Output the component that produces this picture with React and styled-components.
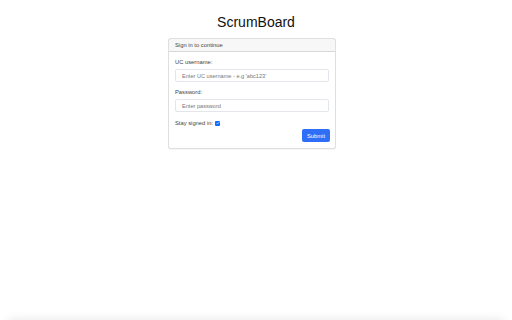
import styled, { createGlobalStyle } from 'styled-components';

const GlobalStyle = createGlobalStyle`
	html, body {
		margin: 0;
		padding: 0;
		background: #fff;
		font-family: 'Liberation Sans', Arial, sans-serif;
		color: #212529;
	}
`;

const Page = styled.div`
	width: 512px;
	height: 320px;
	display: flex;
	flex-direction: column;
	align-items: center;
	overflow: hidden;
	position: relative;
`;

const Title = styled.h1`
	margin: 15px 0 0;
	height: 23px;
	font-size: 14px;
	line-height: 14px;
	font-weight: 400;
	color: #111;
`;

const Card = styled.div`
	width: 168px;
	margin-right: 8px;
	box-sizing: border-box;
	border: 1px solid rgba(0, 0, 0, 0.125);
	border-radius: 3px;
	background: #fff;
	box-shadow: 0 1px 1px rgba(0, 0, 0, 0.04);
`;

const CardHeader = styled.div`
	height: 12px;
	padding: 0 6px;
	display: flex;
	align-items: center;
	font-size: 5.8px;
	color: #444;
	background: rgba(0, 0, 0, 0.03);
	border-bottom: 1px solid rgba(0, 0, 0, 0.125);
`;

const CardBody = styled.form`
	padding: 6px 6px 6px;
	display: flex;
	flex-direction: column;
`;

const Label = styled.label`
	font-size: 5.8px;
	line-height: 8px;
	color: #444;
	margin-top: ${({ $first }) => ($first ? '0' : '6px')};
	margin-bottom: 3px;
`;

const Input = styled.input`
	height: 13px;
	box-sizing: border-box;
	border: 1px solid #e3e6ea;
	border-radius: 2px;
	padding: 0 6px;
	font-family: inherit;
	font-size: 5.6px;
	color: #333;
	outline: none;

	&::placeholder {
		color: #777;
	}
`;

const CheckRow = styled.div`
	margin-top: 7px;
	display: flex;
	align-items: center;
	gap: 2px;
	font-size: 5.8px;
	line-height: 8px;
	color: #444;
`;

const Check = styled.span`
	width: 5px;
	height: 5px;
	border-radius: 1px;
	background: #0d6efd;
	display: inline-flex;
	align-items: center;
	justify-content: center;
`;

const Actions = styled.div`
	display: flex;
	justify-content: flex-end;
	margin-top: 2px;
	margin-right: -1px;
`;

const SubmitButton = styled.button`
	height: 13px;
	padding: 0 5px;
	border: none;
	border-radius: 2px;
	background: #2f6ef7;
	color: #fff;
	font-family: inherit;
	font-size: 5.8px;
	cursor: pointer;
`;

const BottomShade = styled.div`
	position: absolute;
	left: 8px;
	right: 8px;
	bottom: -6px;
	height: 6px;
	box-shadow: 0 0 10px rgba(0, 0, 0, 0.12);
`;

const App = () => {
	return (
		<>
			<GlobalStyle />
			<Page>
				<Title>ScrumBoard</Title>
				<Card>
					<CardHeader>Sign in to continue</CardHeader>
					<CardBody onSubmit={(e) => e.preventDefault()}>
						<Label $first>UC username:</Label>
						<Input placeholder="Enter UC username - e.g 'abc123'" />
						<Label>Password:</Label>
						<Input type="password" placeholder="Enter password" />
						<CheckRow>
							Stay signed in:
							<Check>
								<svg width="4" height="4" viewBox="0 0 16 16">
									<path
										d="M3 8.5l3 3 7-7"
										fill="none"
										stroke="#fff"
										strokeWidth="2.5"
										strokeLinecap="round"
										strokeLinejoin="round"
									/>
								</svg>
							</Check>
						</CheckRow>
						<Actions>
							<SubmitButton type="submit">Submit</SubmitButton>
						</Actions>
					</CardBody>
				</Card>
				<BottomShade />
			</Page>
		</>
	);
};

export default App;
